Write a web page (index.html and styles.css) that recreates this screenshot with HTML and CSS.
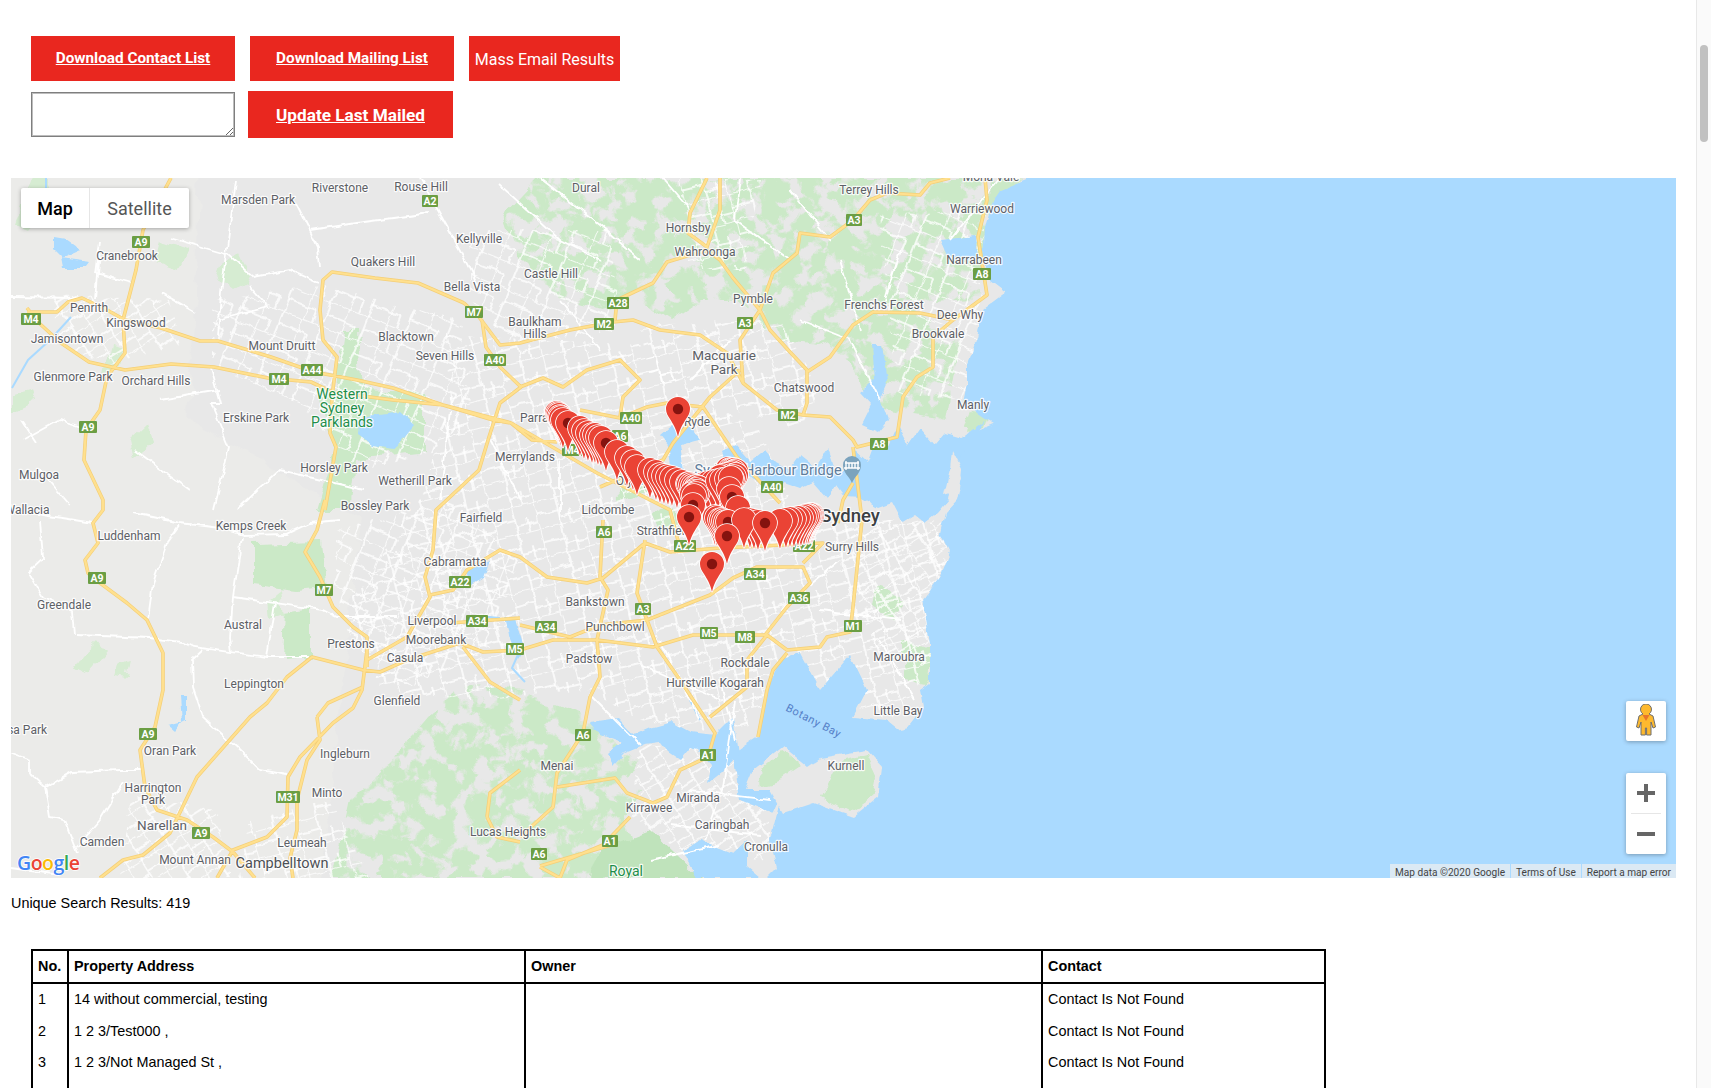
FILE: index.html
```html
<!DOCTYPE html>
<html lang="en">
<head>
<meta charset="utf-8">
<title>Search Results</title>
<link rel="stylesheet" href="styles.css">
</head>
<body>
<div class="page">
<main class="content">
  <div class="actions">
    <a class="btn btn-wide" href="#">Download Contact List</a>
    <a class="btn btn-wide" href="#">Download Mailing List</a>
    <button class="btn btn-plain" type="button">Mass Email Results</button>
  </div>
  <div class="actions actions-second">
    <textarea class="note"></textarea>
    <a class="btn btn-update" href="#">Update Last Mailed</a>
  </div>

  <div class="map">
    <svg class="map-svg" viewBox="11 178 1665 700" width="1665" height="700" xmlns="http://www.w3.org/2000/svg">
      <defs>
        <filter id="rough" filterUnits="userSpaceOnUse" x="-50" y="100" width="1800" height="850">
          <feTurbulence type="fractalNoise" baseFrequency="0.045" numOctaves="3" seed="4" result="n"/>
          <feDisplacementMap in="SourceGraphic" in2="n" scale="16" xChannelSelector="R" yChannelSelector="G"/>
        </filter>
        <filter id="fine" filterUnits="userSpaceOnUse" x="-50" y="100" width="1800" height="850">
          <feTurbulence type="fractalNoise" baseFrequency="0.09" numOctaves="2" seed="9" result="n"/>
          <feDisplacementMap in="SourceGraphic" in2="n" scale="6" xChannelSelector="R" yChannelSelector="G"/>
        </filter>
        <filter id="mottle" filterUnits="userSpaceOnUse" x="-50" y="100" width="1800" height="850">
          <feTurbulence type="fractalNoise" baseFrequency="0.055" numOctaves="4" seed="12" result="n"/>
          <feColorMatrix in="n" type="matrix" values="0 0 0 0 0  0 0 0 0 0  0 0 0 0 0  9 0 0 0 -3.6" result="m"/>
          <feComposite in="SourceGraphic" in2="m" operator="in" result="c"/>
          <feTurbulence type="fractalNoise" baseFrequency="0.05" numOctaves="2" seed="5" result="d"/>
          <feDisplacementMap in="c" in2="d" scale="14" xChannelSelector="R" yChannelSelector="G"/>
        </filter>
        <pattern id="st1" width="44" height="28" patternUnits="userSpaceOnUse" patternTransform="rotate(-14)">
          <path d="M0 0H44M0 14H22M22 0V28M0 0V28M33 14V28M22 20H44" class="st-line"/>
        </pattern>
        <pattern id="st2" width="40" height="26" patternUnits="userSpaceOnUse" patternTransform="rotate(22)">
          <path d="M0 0H40M20 13H40M20 0V26M0 0V26M0 13H10M10 13V26" class="st-line"/>
        </pattern>
        <pattern id="st3" width="32" height="23" patternUnits="userSpaceOnUse" patternTransform="rotate(-32)">
          <path d="M0 0H32M16 0V23M0 0V23M16 11H32M0 16H16" class="st-line"/>
        </pattern>
        <path id="hw" d="M27 308L39 323 61 343 89 362 125 370 171 364 214 367 268 378 311 382 332 392 393 400 443 405 493 420 511 423 532 440 557 442
          M27 312H57L68 302 82 298 107 310 125 320 161 328 200 341H218L271 357 314 372 357 380 393 388 443 405 511 423 597 473 670 510 680 548
          M171 178L143 230 136 270 123 320 125 353 107 377 100 410 86 430 84 460 103 500V510L93 523 98 543 85 560 88 573 100 583 127 603 147 620 163 653V690L155 727 140 750 145 787 157 810 187 820 213 837 233 852 255 878
          M217 878L233 850 267 837 287 817 288 777 300 757 333 723 353 708 362 690 367 650
          M100 878L123 860 143 855 170 833 197 777 250 717 267 703 287 677 312 657 363 670 380 672 407 660 460 643 483 652 520 650 553 640 597 640 653 647 693 635 767 635 787 650 820 647 827 637 850 632 853 607 862 520 853 447
          M325 500L317 530 305 552 320 577 333 607 353 627 367 637 367 667
          M464 303L418 283 375 278 332 272 323 280 320 310 323 340 337 357 332 397 330 433 336 447 325 510
          M464 303L479 317 500 345 520 343 570 330 613 322 633 320 660 330 700 335 727 353 743 383 777 410 803 415 830 417 853 440 857 447 897 437 903 397 917 377 933 367V337L953 320 987 295 978 237 987 200 985 178
          M482 320L486 347 500 367 521 387 500 403 489 437 479 470 436 510 433 550 425 577 430 597 407 637 367 660
          M430 595L453 590 467 570 500 550 520 557 547 577 587 583 603 578 645 543 670 552 720 548 823 543 803 563
          M450 623L520 618M463 647L490 682 520 700
          M645 540L637 593 657 647 680 680 715 733 708 757 680 770 667 797 653 803 627 793 615 778 557 787
          M520 625L570 637 600 625 647 620 710 595 733 578 757 567H803L810 583 787 607 765 635
          M603 520L600 577 608 590 597 640 600 677 590 697 583 733 557 773 553 807 520 837
          M540 867L560 878M560 878L567 860 603 845 630 817
          M600 487L663 460 673 443 710 397 740 370
          M520 387L543 378 563 387 587 370 620 360 640 380 623 397 620 417
          M580 410L620 418 647 407 667 403 703 407 737 457 780 503
          M615 320L617 300 653 283 667 262 707 250 720 260 733 278 760 310 770 330 790 352 807 370V403L803 415
          M707 178L690 213 688 233 707 247 720 210V178
          M870 200L853 220 830 237 800 233 797 253 773 273 760 310 740 340 743 383
          M807 372L830 357 853 325 873 312 920 313 953 320
          M887 193L920 195 930 183 950 178M870 200L887 193
          M853 483L843 500 838 523
          M747 663V687L710 717M767 635L747 660V665
          M787 653L773 670 767 690 758 737
          M487 817L490 793 520 770M487 817L497 837 520 842
          M317 717L328 703 363 687M317 717L320 740 307 760 297 800V830L290 858 293 878
          M611 845L540 866"/>
        <path id="pin" class="pin-body" d="M0 0C-2-9-5-13-8-18-10-21-12-24-12-28A12 12 0 1 1 12-28C12-24 10-21 8-18 5-13 2-9 0 0Z"/>
        <g id="pind">
          <use href="#pin"/>
          <circle class="pin-dot" cx="0" cy="-28" r="5.2"/>
        </g>
      </defs>

      <rect class="land" x="11" y="178" width="1665" height="700"/>
      <path class="land-west" filter="url(#rough)" d="M0 170H200L190 420 360 520 320 890H0Z"/>

      <!-- parks -->
      <g class="park" filter="url(#rough)">
        <path d="M343 330H357L362 390 425 392 425 450 357 458 350 510 318 510 335 450 318 392 335 385Z"/>
        <path d="M253 545L320 543 326 587 296 590 253 585Z"/>
        <path d="M284 612L310 608V660L282 662Z"/>
        <path d="M753 767L783 747 807 767 790 790 755 785Z"/>
        <path d="M837 757L868 750 882 767 878 797 853 817 820 800Z"/>
        <path d="M905 640L932 650 928 685 905 680Z"/>
        <path d="M970 410L990 412 985 428 965 435Z"/>
        <path d="M878 590L905 598 895 620 875 610Z"/>
        <path d="M650 515L668 505 680 525 660 535Z"/>
        <path d="M618 470L650 460 655 490 620 500Z"/>
      </g>
      <g class="park-faint" filter="url(#rough)">
        <path d="M30 178H48L55 205 30 232 14 225Z"/>
        <path d="M12 395L30 390 34 402 12 412Z"/>
        <path d="M80 655L96 640 105 652 88 672 74 665Z"/>
        <path d="M112 345L125 348 122 365 106 375Z"/>
        <path d="M222 262L240 255 252 280 232 292 216 280Z"/>
        <path d="M130 440L146 425 152 442 134 458Z"/>
        <path d="M160 240L190 250 178 270 155 262Z"/>
        <path d="M120 665L132 660 128 680 116 678Z"/>
        <path d="M270 600L282 590 285 615 272 620Z"/>
      </g>
      <g class="park" filter="url(#mottle)">
        <path d="M540 178H1030L985 235 978 300 930 302 860 330 820 345 775 340 760 320 735 300 700 300 670 320 640 300 600 310 560 300 520 260 505 215Z"/>
        <path d="M333 878L350 800 390 760 430 715 470 685 520 690 580 715 590 780 640 790 625 815 640 878Z"/>
        <path d="M520 690L590 720 640 760 620 795 540 790Z"/>
        <path d="M830 340L900 300 960 340 945 420 880 410Z"/>
      </g>
      <path class="park-soft" d="M600 850L650 830 700 878H590Z" filter="url(#rough)"/>

      <!-- urban street fabric -->
      <g filter="url(#fine)">
        <path fill="url(#st1)" d="M445 335L640 345 700 400 760 430 800 520 940 520 950 610 925 680 890 720 780 680 740 735 640 720 590 690 470 700 380 690 350 600 420 500 450 400Z"/>
        <path fill="url(#st2)" d="M212 300L320 285 460 320 470 405 440 450 360 470 300 405 212 365Z"/>
        <path fill="url(#st3)" d="M50 295L170 300 180 345 110 365 60 345Z"/>
        <path fill="url(#st2)" d="M335 530L450 500 520 560 490 650 400 690 350 640 335 590Z"/>
        <path fill="url(#st1)" d="M250 820L330 800 370 878H240Z"/>
        <path fill="url(#st3)" d="M130 795L215 810 230 878H120Z"/>
        <path fill="url(#st1)" d="M640 325L780 320 820 390 800 430 700 400 650 380Z"/>
        <path fill="url(#st2)" d="M880 215L985 210 975 400 900 395 890 330Z"/>
        <path fill="url(#st3)" d="M640 745L770 750 770 860 680 850 630 815Z"/>
        <path fill="url(#st1)" d="M680 178L760 180 745 270 690 270Z"/>
        <path fill="url(#st2)" d="M470 230L610 230 620 330 510 345 470 300Z"/>
        <path fill="url(#st3)" d="M850 530L945 520 950 600 925 665 880 660 860 610Z"/>
      </g>

      <!-- water -->
      <g class="water" filter="url(#fine)">
        <path d="M1040 170L1030 178 1000 190 993 200 985 227 983 262 987 277 1007 292 983 310 977 337 967 367 967 383 963 403 983 417 993 423 970 433 950 445 962 478 957 500 945 513 940 533 950 553 940 577 923 600 930 643 930 683 920 690 923 707 903 733 887 720 853 717 867 690 850 655 820 690 800 653 780 660 767 687 758 737 733 753 740 800 773 813 783 790 770 840 777 868 767 878 690 890H1700V170Z"/>
        <path d="M985 420L962 438 945 433 935 445 920 428 908 445 898 425 888 447 876 440 868 462 855 450 846 468 836 472 828 448 815 468 800 456 790 470 775 462 765 450 750 462 735 445 722 452 728 468 745 473 760 483 783 482 800 488 812 482 826 498 836 485 845 497 860 498 878 508 892 503 902 522 915 514 925 522 938 512 948 500 952 475 965 450Z"/>
        <path d="M872 345H882L888 380 880 398 888 420 878 432 862 425 872 405 860 392 875 380Z"/>
        <path d="M590 722L618 718 634 735 650 728 672 722 690 732 715 735 733 717 738 755 722 772 708 783 712 765 698 750 690 748 680 760 668 752 660 742 645 744 625 752 613 765 608 755 622 742 600 734Z"/>
        <path d="M697 878L683 850 700 840 733 853 747 840 747 867 760 878Z"/>
        <path d="M940 240L975 236 978 258 950 262Z"/>
        <path d="M672 425L690 427 700 440 680 445 684 470H672L668 445 660 435Z"/>
        <path d="M360 418L400 412 414 425 395 448 372 445 358 435Z"/>
        <path d="M54 238L66 240 80 250 62 258 54 250Z"/>
        <path d="M60 258L90 262 85 268 62 268Z"/>
        <path d="M466 570L490 560 484 578 470 585Z"/>
        <path d="M180 695L186 695 186 720 182 722Z"/>
        <path d="M168 726L183 722 175 732Z"/>
        <path d="M505 615L515 620 525 650 518 660 510 640Z"/>
      </g>
      <path class="river" d="M71 317L50 340 28 360 12 388M46 178V225M520 650L512 668 525 682M478 616L500 618M700 720L690 700"/>
      <g class="land-patch" filter="url(#fine)">
        <path d="M753 770L783 747 807 767 820 758 867 750 882 767 878 797 853 817 813 803 783 813 770 790 745 790Z"/>
        <path d="M952 450L962 470 960 490 944 495 950 470Z"/>
      </g>
      <g class="park" filter="url(#rough)">
        <path d="M760 772L782 752 803 768 785 780 762 785Z"/>
        <path d="M838 762L868 755 877 775 872 797 850 812 822 797Z"/>
        <path d="M968 412L985 418 976 430 962 430Z"/>
      </g>

      <!-- local roads -->
      <g class="road" filter="url(#fine)">
        <path d="M11 510L93 523M133 513L180 523 220 528 243 535 286 534 310 523 340 520M180 525L167 543 153 583 148 620M242 537L233 597 230 637 232 652M233 597L323 610 337 617 397 617M275 603L267 657M77 635L150 638 183 642 193 647 267 657 312 657M203 650L192 660 193 687 203 717 243 753 260 770 287 775M40 520L43 558 28 572 43 597 73 610 75 635M30 773L45 787 73 772 122 770 143 770M77 847L100 820 123 783M45 787L50 817 65 820 78 853M11 868L60 875M11 753L30 760 30 773"/>
        <path d="M236 180L221 293 218 337M296 203L318 247 320 267M311 230L357 223 429 213M171 238L229 255 254 277 289 270 318 283M250 287L268 307 218 320M100 242L96 273 132 283M161 293L196 313M211 367L221 403 211 403 229 447 214 510M364 490L279 470 257 490 236 510M11 297L79 298M21 420L36 443M160 400L220 390M135 450L190 490M24 440L60 420 90 430M40 470L70 505M100 250L96 300"/>
        <path d="M420 178L460 250 480 290M500 185L560 240 600 260M540 178L600 225 640 260M560 300L600 350M660 175L690 210M740 178L735 220 790 260M790 190L830 240M1000 178L950 240M840 260L860 330M900 250L885 300M730 340L690 380M800 320L850 340 880 400M450 410L440 500M490 440L520 500M560 460L560 520"/>
        <path d="M640 665L720 700M660 640L700 720M820 610L900 620M880 640L915 700M780 610L840 560M720 680L735 740M690 790L770 800M670 825L760 835M650 860L720 845M735 700L728 753 723 787 705 840M590 695L640 745"/>
      </g>

      <!-- highways -->
      <use href="#hw" class="hw-edge"/>
      <use href="#hw" class="hw-fill"/>

      <!-- place labels -->
      <g class="lb">
        <text x="340" y="192">Riverstone</text><text x="421" y="191">Rouse Hill</text><text x="586" y="192">Dural</text>
        <text x="869" y="194">Terrey Hills</text><text x="982" y="213">Warriewood</text><text x="991" y="181">Mona Vale</text>
        <text x="258" y="204">Marsden Park</text><text x="479" y="243">Kellyville</text><text x="688" y="232">Hornsby</text>
        <text x="705" y="256">Wahroonga</text><text x="127" y="260">Cranebrook</text><text x="383" y="266">Quakers Hill</text>
        <text x="551" y="278">Castle Hill</text><text x="974" y="264">Narrabeen</text><text x="472" y="291">Bella Vista</text>
        <text x="753" y="303">Pymble</text><text x="884" y="309">Frenchs Forest</text><text x="960" y="319">Dee Why</text>
        <text x="89" y="312">Penrith</text><text x="136" y="327">Kingswood</text><text x="535" y="326">Baulkham</text><text x="535" y="338">Hills</text>
        <text x="938" y="338">Brookvale</text><text x="67" y="343">Jamisontown</text><text x="406" y="341">Blacktown</text>
        <text x="282" y="350">Mount Druitt</text><text x="445" y="360">Seven Hills</text>
        <text x="73" y="381">Glenmore Park</text><text x="156" y="385">Orchard Hills</text><text x="804" y="392">Chatswood</text>
        <text x="973" y="409">Manly</text><text x="256" y="422">Erskine Park</text><text x="697" y="426">Ryde</text>
        <text x="550" y="422">Parramatta</text><text x="525" y="461">Merrylands</text><text x="334" y="472">Horsley Park</text>
        <text x="39" y="479">Mulgoa</text><text x="415" y="485">Wetherill Park</text><text x="375" y="510">Bossley Park</text>
        <text x="608" y="514">Lidcombe</text><text x="27" y="514">Wallacia</text><text x="481" y="522">Fairfield</text>
        <text x="251" y="530">Kemps Creek</text><text x="129" y="540">Luddenham</text><text x="664" y="535">Strathfield</text>
        <text x="852" y="551">Surry Hills</text><text x="455" y="566">Cabramatta</text><text x="651" y="485">Olympic Park</text>
        <text x="64" y="609">Greendale</text><text x="595" y="606">Bankstown</text><text x="243" y="629">Austral</text>
        <text x="432" y="625">Liverpool</text><text x="615" y="631">Punchbowl</text><text x="436" y="644">Moorebank</text>
        <text x="351" y="648">Prestons</text><text x="405" y="662">Casula</text><text x="589" y="663">Padstow</text>
        <text x="899" y="661">Maroubra</text><text x="745" y="667">Rockdale</text><text x="254" y="688">Leppington</text>
        <text x="715" y="687">Hurstville Kogarah</text><text x="397" y="705">Glenfield</text><text x="898" y="715">Little Bay</text>
        <text x="20" y="734">Rosa Park</text><text x="170" y="755">Oran Park</text><text x="345" y="758">Ingleburn</text>
        <text x="846" y="770">Kurnell</text><text x="557" y="770">Menai</text><text x="153" y="792">Harrington</text><text x="153" y="804">Park</text>
        <text x="327" y="797">Minto</text><text x="698" y="802">Miranda</text><text x="649" y="812">Kirrawee</text>
        <text x="722" y="829">Caringbah</text><text x="508" y="836">Lucas Heights</text><text x="766" y="851">Cronulla</text>
        <text x="302" y="847">Leumeah</text><text x="102" y="846">Camden</text><text x="195" y="864">Mount Annan</text>
      </g>
      <text class="lb lb-mid" x="724" y="360">Macquarie</text><text class="lb lb-mid" x="724" y="374">Park</text>
      <text class="lb lb-mid" x="162" y="830">Narellan</text>
      <text class="lb lb-big" x="282" y="868">Campbelltown</text>
      <text class="lb lb-city" x="850" y="522">Sydney</text>
      <text class="lb lb-poi" x="768" y="475">Sydney Harbour Bridge</text>
      <g class="lb lb-park"><text x="342" y="399">Western</text><text x="342" y="413">Sydney</text><text x="342" y="427">Parklands</text><text x="626" y="876">Royal</text></g>
      <text class="lb-bay" transform="translate(812 724) rotate(27)">Botany Bay</text>

      <!-- landmark marker -->
      <path class="poi-pin" d="M852 483C849 476 843 473 843 465A9 9 0 1 1 861 465C861 473 855 476 852 483Z"/>
      <path class="poi-glyph" d="M846 470V461M858 470V461M845 463H859M844 468H860M849 463V468M852 463V468M855 463V468"/>

      <!-- road shields -->
      <g class="shield">
        <g transform="translate(430 201)"><rect x="-8" y="-6" width="16" height="12"/><text y="3.6">A2</text></g>
        <g transform="translate(141 242)"><rect x="-9" y="-6" width="18" height="12"/><text y="3.6">A9</text></g>
        <g transform="translate(854 220)"><rect x="-8" y="-6" width="16" height="12"/><text y="3.6">A3</text></g>
        <g transform="translate(982 274)"><rect x="-9" y="-6" width="18" height="12"/><text y="3.6">A8</text></g>
        <g transform="translate(618 303)"><rect x="-11" y="-6" width="22" height="12"/><text y="3.6">A28</text></g>
        <g transform="translate(474 312)"><rect x="-9" y="-6" width="18" height="12"/><text y="3.6">M7</text></g>
        <g transform="translate(31 319)"><rect x="-10" y="-6" width="20" height="12"/><text y="3.6">M4</text></g>
        <g transform="translate(745 323)"><rect x="-8" y="-6" width="16" height="12"/><text y="3.6">A3</text></g>
        <g transform="translate(604 324)"><rect x="-10" y="-6" width="20" height="12"/><text y="3.6">M2</text></g>
        <g transform="translate(495 360)"><rect x="-11" y="-6" width="22" height="12"/><text y="3.6">A40</text></g>
        <g transform="translate(279 379)"><rect x="-10" y="-6" width="20" height="12"/><text y="3.6">M4</text></g>
        <g transform="translate(312 370)"><rect x="-11" y="-6" width="22" height="12"/><text y="3.6">A44</text></g>
        <g transform="translate(88 427)"><rect x="-9" y="-6" width="18" height="12"/><text y="3.6">A9</text></g>
        <g transform="translate(788 415)"><rect x="-10" y="-6" width="20" height="12"/><text y="3.6">M2</text></g>
        <g transform="translate(631 418)"><rect x="-11" y="-6" width="22" height="12"/><text y="3.6">A40</text></g>
        <g transform="translate(879 444)"><rect x="-9" y="-6" width="18" height="12"/><text y="3.6">A8</text></g>
        <g transform="translate(620 436)"><rect x="-8" y="-6" width="16" height="12"/><text y="3.6">A6</text></g>
        <g transform="translate(572 450)"><rect x="-10" y="-6" width="20" height="12"/><text y="3.6">M4</text></g>
        <g transform="translate(772 487)"><rect x="-11" y="-6" width="22" height="12"/><text y="3.6">A40</text></g>
        <g transform="translate(604 532)"><rect x="-8" y="-6" width="16" height="12"/><text y="3.6">A6</text></g>
        <g transform="translate(804 546)"><rect x="-11" y="-6" width="22" height="12"/><text y="3.6">A22</text></g>
        <g transform="translate(685 546)"><rect x="-11" y="-6" width="22" height="12"/><text y="3.6">A22</text></g>
        <g transform="translate(755 574)"><rect x="-11" y="-6" width="22" height="12"/><text y="3.6">A34</text></g>
        <g transform="translate(97 578)"><rect x="-9" y="-6" width="18" height="12"/><text y="3.6">A9</text></g>
        <g transform="translate(324 590)"><rect x="-9" y="-6" width="18" height="12"/><text y="3.6">M7</text></g>
        <g transform="translate(460 582)"><rect x="-11" y="-6" width="22" height="12"/><text y="3.6">A22</text></g>
        <g transform="translate(799 598)"><rect x="-11" y="-6" width="22" height="12"/><text y="3.6">A36</text></g>
        <g transform="translate(643 609)"><rect x="-8" y="-6" width="16" height="12"/><text y="3.6">A3</text></g>
        <g transform="translate(477 621)"><rect x="-11" y="-6" width="22" height="12"/><text y="3.6">A34</text></g>
        <g transform="translate(546 627)"><rect x="-11" y="-6" width="22" height="12"/><text y="3.6">A34</text></g>
        <g transform="translate(853 626)"><rect x="-9" y="-6" width="18" height="12"/><text y="3.6">M1</text></g>
        <g transform="translate(709 633)"><rect x="-9" y="-6" width="18" height="12"/><text y="3.6">M5</text></g>
        <g transform="translate(745 637)"><rect x="-10" y="-6" width="20" height="12"/><text y="3.6">M8</text></g>
        <g transform="translate(515 649)"><rect x="-9" y="-6" width="18" height="12"/><text y="3.6">M5</text></g>
        <g transform="translate(148 734)"><rect x="-9" y="-6" width="18" height="12"/><text y="3.6">A9</text></g>
        <g transform="translate(583 735)"><rect x="-8" y="-6" width="16" height="12"/><text y="3.6">A6</text></g>
        <g transform="translate(708 755)"><rect x="-8" y="-6" width="16" height="12"/><text y="3.6">A1</text></g>
        <g transform="translate(288 797)"><rect x="-12" y="-6" width="24" height="12"/><text y="3.6">M31</text></g>
        <g transform="translate(201 833)"><rect x="-9" y="-6" width="18" height="12"/><text y="3.6">A9</text></g>
        <g transform="translate(610 841)"><rect x="-8" y="-6" width="16" height="12"/><text y="3.6">A1</text></g>
        <g transform="translate(539 854)"><rect x="-8" y="-6" width="16" height="12"/><text y="3.6">A6</text></g>
      </g>

      <!-- google wordmark -->
      <text class="gg" x="17" y="870"><tspan class="gb">G</tspan><tspan class="gr">o</tspan><tspan class="gy">o</tspan><tspan class="gb">g</tspan><tspan class="gg-l">l</tspan><tspan class="gr">e</tspan></text>

      <!-- property pins -->
      <g class="pins">
        <use href="#pin" transform="translate(557 441)"/><use href="#pin" transform="translate(558 442)"/><use href="#pin" transform="translate(559 443)"/><use href="#pin" transform="translate(560 445)"/><use href="#pin" transform="translate(561 446)"/><use href="#pin" transform="translate(563 448)"/><use href="#pind" transform="translate(568 451)"/>
        <use href="#pin" transform="translate(580 456)"/><use href="#pin" transform="translate(584 459)"/><use href="#pin" transform="translate(588 461)"/><use href="#pin" transform="translate(592 463)"/><use href="#pin" transform="translate(595 463)"/><use href="#pin" transform="translate(598 465)"/><use href="#pin" transform="translate(601 466)"/><use href="#pind" transform="translate(606 471)"/>
        <use href="#pin" transform="translate(617 480)"/><use href="#pind" transform="translate(627 486)"/><use href="#pin" transform="translate(633 490)"/><use href="#pin" transform="translate(637 495)"/><use href="#pind" transform="translate(650 498)"/>
        <use href="#pin" transform="translate(656 500)"/><use href="#pin" transform="translate(660 503)"/><use href="#pin" transform="translate(664 504)"/><use href="#pin" transform="translate(668 505)"/><use href="#pin" transform="translate(672 506)"/><use href="#pin" transform="translate(677 508)"/><use href="#pin" transform="translate(682 510)"/>

        <use href="#pin" transform="translate(728 497)"/><use href="#pin" transform="translate(730 498)"/><use href="#pin" transform="translate(732 498)"/><use href="#pin" transform="translate(734 498)"/><use href="#pin" transform="translate(736 499)"/><use href="#pin" transform="translate(734 500)"/><use href="#pin" transform="translate(732 501)"/><use href="#pin" transform="translate(730 502)"/><use href="#pin" transform="translate(726 503)"/><use href="#pin" transform="translate(722 504)"/><use href="#pin" transform="translate(720 505)"/><use href="#pin" transform="translate(736 503)"/><use href="#pin" transform="translate(734 505)"/><use href="#pin" transform="translate(732 507)"/>

        <use href="#pin" transform="translate(688 512)"/><use href="#pin" transform="translate(692 514)"/>
        <use href="#pin" transform="translate(700 513)"/><use href="#pin" transform="translate(704 512)"/><use href="#pin" transform="translate(708 511)"/><use href="#pin" transform="translate(713 510)"/>

        <use href="#pin" transform="translate(689 512)"/><use href="#pin" transform="translate(691 513)"/><use href="#pin" transform="translate(693 514)"/><use href="#pin" transform="translate(695 515)"/><use href="#pin" transform="translate(697 515)"/><use href="#pin" transform="translate(699 516)"/><use href="#pin" transform="translate(696 518)"/><use href="#pin" transform="translate(694 520)"/><use href="#pin" transform="translate(692 522)"/><use href="#pin" transform="translate(698 520)"/><use href="#pin" transform="translate(696 522)"/><use href="#pin" transform="translate(694 524)"/>
        <use href="#pind" transform="translate(693 533)"/>

        <use href="#pin" transform="translate(718 509)"/><use href="#pin" transform="translate(722 508)"/><use href="#pin" transform="translate(727 507)"/><use href="#pin" transform="translate(731 506)"/>
        <use href="#pin" transform="translate(729 517)"/><use href="#pind" transform="translate(732 525)"/><use href="#pin" transform="translate(738 536)"/>
        <use href="#pin" transform="translate(812 543)"/><use href="#pin" transform="translate(811 543)"/><use href="#pin" transform="translate(810 543)"/><use href="#pin" transform="translate(809 544)"/><use href="#pin" transform="translate(808 544)"/><use href="#pin" transform="translate(806 544)"/><use href="#pin" transform="translate(804 545)"/><use href="#pin" transform="translate(801 546)"/><use href="#pin" transform="translate(798 546)"/><use href="#pin" transform="translate(794 547)"/><use href="#pin" transform="translate(790 547)"/><use href="#pin" transform="translate(786 548)"/><use href="#pin" transform="translate(780 549)"/>
        <use href="#pin" transform="translate(750 548)"/><use href="#pin" transform="translate(754 549)"/><use href="#pin" transform="translate(758 550)"/>
        <use href="#pin" transform="translate(715 545)"/><use href="#pin" transform="translate(717 546)"/><use href="#pin" transform="translate(720 548)"/><use href="#pin" transform="translate(722 548)"/><use href="#pin" transform="translate(724 549)"/><use href="#pin" transform="translate(726 550)"/><use href="#pind" transform="translate(728 550)"/><use href="#pin" transform="translate(744 548)"/>
        <use href="#pind" transform="translate(765 551)"/>
        <use href="#pind" transform="translate(689 545)"/>
        <use href="#pind" transform="translate(727 564)"/>
        <use href="#pind" transform="translate(712 592)"/>
        <use href="#pind" transform="translate(678 437)"/>
      </g>
    </svg>

    <div class="map-type">
      <span class="map-type-item is-on">Map</span>
      <span class="map-type-item">Satellite</span>
    </div>
    <button class="ctl pegman" type="button" aria-label="Street View">
      <svg width="20" height="34" viewBox="0 0 20 34"><path class="peg" d="M7 10A5.500 5.500 0 1 1 13 10L17 12 19.500 23 17 24 15 18V31H10.600V24H9.400V31H5V18L3 24 .5 23 3 12Z"/><path class="peg-tie" d="M6.500 11H13.500L10 17Z"/></svg>
    </button>
    <div class="ctl zoom">
      <button class="zoom-btn" type="button" aria-label="Zoom in"><svg width="18" height="18" viewBox="0 0 18 18"><path d="M7 0h4v7h7v4h-7v7H7v-7H0V7h7z"/></svg></button>
      <span class="zoom-rule"></span>
      <button class="zoom-btn" type="button" aria-label="Zoom out"><svg width="18" height="18" viewBox="0 0 18 18"><path d="M0 7h18v4H0z"/></svg></button>
    </div>
    <div class="attrib">
      <span>Map data ©2020 Google</span><span>Terms of Use</span><span>Report a map error</span>
    </div>
  </div>

  <p class="count">Unique Search Results: 419</p>

  <table class="results">
    <colgroup><col class="c-no"><col class="c-addr"><col class="c-owner"><col class="c-contact"></colgroup>
    <thead><tr><th>No.</th><th>Property Address</th><th>Owner</th><th>Contact</th></tr></thead>
    <tbody>
      <tr><td>1</td><td>14 without commercial, testing</td><td></td><td>Contact Is Not Found</td></tr>
      <tr><td>2</td><td>1 2 3/Test000 ,</td><td></td><td>Contact Is Not Found</td></tr>
      <tr><td>3</td><td>1 2 3/Not Managed St ,</td><td></td><td>Contact Is Not Found</td></tr>
      <tr><td>&nbsp;</td><td></td><td></td><td></td></tr>
    </tbody>
  </table>
</main>
<aside class="scrollbar"><span class="thumb"></span></aside>
</div>
</body>
</html>
```

FILE: styles.css
```css
html, body { margin: 0; height: 1088px; overflow: hidden; background: #fff; }
body { font: 14.400px/1.2 "Liberation Sans", Arial, sans-serif; color: #000; }
.page { display: flex; height: 1088px; overflow: hidden; }
.content { flex: 1; min-width: 0; }
.scrollbar { width: 14px; flex: none; background: #fafafa; border-left: 1px solid #e8e8e8; position: relative; }
.thumb { position: absolute; top: 45px; left: 3px; width: 8px; height: 97px; border-radius: 4px; background: #c1c1c1; }

.actions { display: flex; gap: 15px; padding: 36px 0 0 31px; align-items: flex-start; }
.actions-second { padding-top: 10px; gap: 13px; }
.btn { display: flex; align-items: center; justify-content: center; height: 45px; box-sizing: border-box; background: #e9271f; color: #fff; border: 0; font-family: Roboto, Arial, sans-serif; }
.btn-wide { width: 204px; font-size: 15.300px; font-weight: 700; text-decoration: underline; }
.btn-plain { width: 151px; padding: 2px 0 0; font-size: 16px; }
.btn-update { width: 205px; height: 47px; padding-top: 2px; font-size: 17.200px; font-weight: 700; text-decoration: underline; }
.note { width: 204px; height: 45px; margin-top: 1px; box-sizing: border-box; border: 1px solid #7f7f7f; box-shadow: inset 0 0 0 1px #bdbdbd; background: #fff; padding: 2px; }

.map { position: relative; width: 1665px; height: 700px; margin: 40px 0 0 11px; overflow: hidden; background: #aadaff; }
.map-svg { display: block; }
.land { fill: #e8e8e8; }
.land-west { fill: #ebebe9; }
.park { fill: #cbe9c7; }
.park-faint { fill: #d6ecd2; }
.park-soft { fill: #bfe3bb; }
.water { fill: #aadaff; }
.land-patch { fill: #e8e8e8; }
.river { fill: none; stroke: #aadaff; stroke-width: 2; }
.road { fill: none; stroke: #fff; stroke-width: 1.800; }
.st-line { fill: none; stroke: #fff; stroke-width: 1.500; }
.hw-edge { fill: none; stroke: #f4cf78; stroke-width: 3.600; stroke-linejoin: round; }
.hw-fill { fill: none; stroke: #ffe08e; stroke-width: 2.200; stroke-linejoin: round; }

.lb { font-family: Roboto, Arial, sans-serif; font-size: 12px; fill: #5d6066; stroke: #fff; stroke-width: 2.400; stroke-opacity: .85; paint-order: stroke; stroke-linejoin: round; text-anchor: middle; }
.lb-mid { font-size: 13.500px; }
.lb-big { font-size: 14.500px; fill: #4d5056; }
.lb-city { font-size: 18.500px; font-weight: 500; fill: #3c4043; }
.lb-poi { font-size: 14.500px; fill: #5f7d9b; }
.lb-park { font-size: 14px; fill: #1e8e4a; }
.lb-bay { font-family: Roboto, Arial, sans-serif; font-size: 11px; fill: #5580c8; text-anchor: middle; letter-spacing: .6px; }
.poi-pin { fill: #7ba3bd; }
.poi-glyph { fill: none; stroke: #fff; stroke-width: 1.400; }

.shield rect { fill: #6b9e43; rx: 1px; }
.shield text { font-family: Roboto, Arial, sans-serif; font-size: 10.500px; font-weight: 700; fill: #fff; text-anchor: middle; }

.gg { font-family: "Open Sans", Arial, sans-serif; font-size: 19.500px; font-weight: 600; letter-spacing: -.5px; stroke: #fff; stroke-width: 1.500; paint-order: stroke; }
.gb { fill: #4285f4; }
.gr { fill: #ea4335; }
.gy { fill: #fbbc05; }
.gg-l { fill: #34a853; }

.pin-body { fill: #ea4335; stroke: #fff; stroke-width: 1.700; paint-order: stroke; }
.pin-dot { fill: #85130f; }

.map-type { position: absolute; top: 10px; left: 10px; display: flex; width: 168px; height: 40px; background: #fff; border-radius: 2px; box-shadow: 0 1px 4px rgba(0,0,0,.3); font: 18px Roboto, Arial, sans-serif; color: #565656; }
.map-type-item { display: flex; align-items: center; justify-content: center; flex: 1 1 auto; padding: 0 17px; }
.map-type-item.is-on { flex: none; width: 69px; box-sizing: border-box; padding: 0; color: #000; font-weight: 500; border-right: 1px solid #e6e6e6; }

.ctl { position: absolute; right: 10px; width: 40px; background: #fff; border: 0; padding: 0; border-radius: 2px; box-shadow: 0 1px 4px rgba(0,0,0,.3); display: flex; align-items: center; justify-content: center; }
.pegman { top: 523px; height: 40px; }
.peg { fill: #fdb92e; stroke: #6f6f6f; stroke-width: 1; }
.peg-tie { fill: #e8752a; }
.zoom { top: 595px; height: 81px; flex-direction: column; }
.zoom-btn { height: 40px; width: 40px; border: 0; padding: 0; background: none; display: flex; align-items: center; justify-content: center; fill: #666; }
.zoom-rule { width: 30px; height: 1px; background: #e6e6e6; }

.attrib { position: absolute; right: 0; bottom: 0; display: flex; height: 14px; overflow: hidden; gap: 1px; font: 10.100px/18px Roboto, Arial, sans-serif; color: #444; }
.attrib span { background: rgba(240,240,240,.7); padding: 0 5px; white-space: nowrap; }

.count { margin: 17px 0 0 11px; font-size: 14.400px; line-height: 17px; }

.results { border-collapse: collapse; table-layout: fixed; width: 1293px; margin: 37px 0 0 31px; }
.c-no { width: 36px; }
.c-addr { width: 457px; }
.c-owner { width: 517px; }
.c-contact { width: 283px; }
.results th { border: 2px solid #000; padding: 0 5px; height: 31px; text-align: left; font-weight: 700; }
.results td { border-left: 2px solid #000; border-right: 2px solid #000; padding: 0 5px; height: 31.500px; }
```
